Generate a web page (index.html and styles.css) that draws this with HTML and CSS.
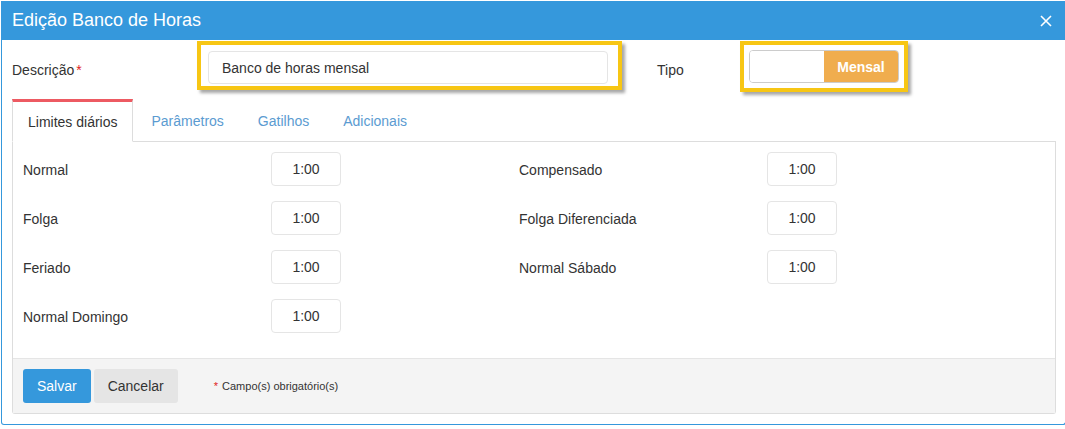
FILE: index.html
```html
<!DOCTYPE html>
<html lang="pt-BR">
<head>
    <meta charset="UTF-8">
    <title>Edição Banco de Horas</title>
    <link rel="stylesheet" href="styles.css">
</head>
<body>
    <div class="modal">
        <div class="modal-header">
            <h4 class="modal-title">Edição Banco de Horas</h4>
            <button class="close" type="button" aria-label="Fechar">
                <svg width="12" height="12" viewBox="0 0 12 12"><path d="M1 1 L11 11 M11 1 L1 11" stroke="#fff" stroke-width="1.6" fill="none"/></svg>
            </button>
        </div>
        <div class="modal-body">
            <div class="form-row">
                <label class="label-desc" for="descricao">Descrição<span class="req">*</span></label>
                <span class="highlight highlight-desc">
                    <input type="text" id="descricao" class="input-desc" value="Banco de horas mensal">
                </span>
                <label class="label-tipo">Tipo</label>
                <span class="highlight highlight-tipo">
                    <span class="switch">
                        <span class="switch-off"></span>
                        <span class="switch-on">Mensal</span>
                    </span>
                </span>
            </div>

            <ul class="nav-tabs">
                <li class="active"><a>Limites diários</a></li>
                <li><a>Parâmetros</a></li>
                <li><a>Gatilhos</a></li>
                <li><a>Adicionais</a></li>
            </ul>

            <div class="tab-panel">
                <div class="limits">
                    <div class="limit"><span class="limit-label">Normal</span><input class="time" value="1:00"></div>
                    <div class="limit"><span class="limit-label">Compensado</span><input class="time" value="1:00"></div>
                    <div class="limit"><span class="limit-label">Folga</span><input class="time" value="1:00"></div>
                    <div class="limit"><span class="limit-label">Folga Diferenciada</span><input class="time" value="1:00"></div>
                    <div class="limit"><span class="limit-label">Feriado</span><input class="time" value="1:00"></div>
                    <div class="limit"><span class="limit-label">Normal Sábado</span><input class="time" value="1:00"></div>
                    <div class="limit"><span class="limit-label">Normal Domingo</span><input class="time" value="1:00"></div>
                </div>
                <div class="form-actions">
                    <button class="btn btn-blue" type="button">Salvar</button>
                    <button class="btn btn-default" type="button">Cancelar</button>
                    <span class="note"><span class="req">*</span> Campo(s) obrigatório(s)</span>
                </div>
            </div>
        </div>
    </div>
</body>
</html>
```

FILE: styles.css
```css
html, body {
    margin: 0;
    padding: 0;
    overflow: hidden;
}
body {
    font-family: "Liberation Sans", Arial, sans-serif;
    font-size: 14px;
    color: #333;
    background-color: #fff;
}
.modal {
    width: 1065px;
    margin: 1px 0 0 1px;
    border: 1px solid #3598dc;
    border-top: none;
    border-radius: 0 0 3px 3px;
    box-sizing: border-box;
}
.modal-header {
    display: flex;
    align-items: center;
    justify-content: space-between;
    height: 39px;
    padding: 0 10px;
    background-color: #3598dc;
}
.modal-title {
    margin: 0;
    font-size: 18px;
    font-weight: normal;
    color: #fff;
}
.close {
    background: none;
    border: none;
    padding: 0;
    margin-right: 3px;
    display: flex;
    cursor: pointer;
}
.modal-body {
    padding: 0 9px 10px 10px;
}
.form-row {
    display: flex;
    align-items: flex-start;
    height: 59px;
    padding-top: 1px;
    box-sizing: border-box;
}
.label-desc, .label-tipo {
    padding-top: 19px;
    line-height: 20px;
}
.label-desc {
    width: 185px;
}
.label-tipo {
    width: 83px;
}
.req {
    color: #e02222;
    margin-left: 2px;
}
.highlight {
    border: 4px solid #f7c614;
    box-shadow: 3px 3px 3px rgba(0, 0, 0, 0.35);
    display: flex;
}
.highlight-desc {
    width: 425px;
    height: 49px;
    padding: 6px 10px 2px 7px;
    margin-right: 35px;
    box-sizing: border-box;
}
.input-desc {
    width: 400px;
    height: 33px;
    border: 1px solid #e5e5e5;
    border-radius: 4px;
    padding: 0 13px;
    font-family: inherit;
    font-size: 14px;
    color: #333;
    box-sizing: border-box;
}
.highlight-tipo {
    padding: 5px;
}
.switch {
    display: flex;
    width: 150px;
    height: 33px;
    border: 1px solid #ccc;
    border-radius: 4px;
    overflow: hidden;
    box-sizing: border-box;
}
.switch-off {
    width: 74px;
    background-color: #fff;
}
.switch-on {
    flex: 1;
    display: flex;
    align-items: center;
    justify-content: center;
    background-color: #f0ad4e;
    color: #fff;
    font-weight: bold;
}
.nav-tabs {
    display: flex;
    list-style: none;
    margin: 0;
    padding: 0;
    border-bottom: 1px solid #ddd;
}
.nav-tabs li {
    margin-right: 2px;
    margin-bottom: -1px;
}
.nav-tabs a {
    display: block;
    padding: 9px 15px 10px;
    line-height: 20px;
    color: #5b9bd1;
    border: 1px solid transparent;
    border-top: 3px solid transparent;
    cursor: pointer;
}
.nav-tabs li.active a {
    color: #333;
    background-color: #fff;
    border-color: #ddd;
    border-top-color: #ed5a62;
    border-bottom-color: #fff;
    padding-top: 10px;
    padding-bottom: 9px;
}
.tab-panel {
    border: 1px solid #ddd;
    border-top: none;
    border-radius: 0 0 3px 3px;
}
.limits {
    display: grid;
    grid-template-columns: 496px 496px;
    row-gap: 15px;
    padding: 10px 10px 25px;
}
.limit {
    display: flex;
    align-items: center;
}
.limit-label {
    width: 248px;
    padding-top: 2px;
}
.time {
    width: 70px;
    height: 34px;
    border: 1px solid #e5e5e5;
    border-radius: 4px;
    text-align: center;
    font-family: inherit;
    font-size: 14px;
    color: #333;
    box-sizing: border-box;
}
.form-actions {
    display: flex;
    align-items: center;
    padding: 10px 10px;
    background-color: #f4f4f4;
    border-top: 1px solid #e5e5e5;
}
.btn {
    height: 34px;
    padding: 0 14px;
    border: none;
    border-radius: 3px;
    font-family: inherit;
    font-size: 14px;
    cursor: pointer;
}
.btn-blue {
    background-color: #3598dc;
    color: #fff;
}
.btn-default {
    margin-left: 3px;
    padding: 0 14px;
    background-color: #e5e5e5;
    color: #333;
}
.note {
    margin-left: 34px;
    font-size: 11px;
    color: #333;
}
.note .req {
    margin-right: 1px;
}
```
